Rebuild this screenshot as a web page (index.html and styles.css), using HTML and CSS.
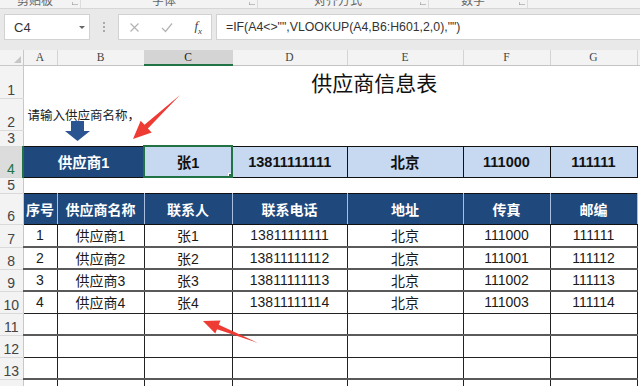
FILE: index.html
```html
<!DOCTYPE html>
<html lang="zh-CN">
<head>
  <meta charset="UTF-8" />
  <title>供应商信息表</title>
  <link rel="stylesheet" href="styles.css">
</head>
<body>
  <!-- ribbon group labels, cut off at the top -->
  <div class="ribbon">
    <div class="group g1"><span class="label">剪贴板</span><span class="launch"></span></div>
    <div class="group g2"><span class="label">字体</span><span class="launch"></span></div>
    <div class="group g3"><span class="label">对齐方式</span><span class="launch"></span></div>
    <div class="group g4"><span class="label">数字</span><span class="launch"></span></div>
  </div>

  <!-- formula bar -->
  <div class="fbar">
    <div class="namebox">
      <span>C4</span>
      <span class="caret"></span>
    </div>
    <div class="dots"><i></i><i></i><i></i></div>
    <div class="fxbox">
      <svg width="11" height="11" viewBox="0 0 11 11"><path d="M1.5 1.5 L9.5 9.5 M9.5 1.5 L1.5 9.5" stroke="#b3b3b3" stroke-width="1.2" fill="none"/></svg>
      <svg width="12" height="11" viewBox="0 0 12 11"><path d="M1 6 L4.5 9.5 L11 1.5" stroke="#b3b3b3" stroke-width="1.2" fill="none"/></svg>
      <span class="fx"><i>f</i><sub>x</sub></span>
    </div>
    <div class="formula">=IF(A4&lt;&gt;"",VLOOKUP(A4,B6:H601,2,0),"")</div>
  </div>

  <div class="sheet">
    <table class="grid">
      <colgroup>
        <col class="w-rh"><col class="w-a"><col class="w-b"><col class="w-c"><col class="w-d">
        <col class="w-e"><col class="w-f"><col class="w-g"><col class="w-h">
      </colgroup>
      <tr class="r-head">
        <th class="corner"><span class="tri"></span></th>
        <th class="ch">A</th><th class="ch">B</th><th class="ch on">C</th><th class="ch">D</th>
        <th class="ch">E</th><th class="ch">F</th><th class="ch">G</th><th class="ch">H</th>
      </tr>
      <tr class="r1">
        <th class="rh">1</th>
        <td colspan="8" class="title">供应商信息表</td>
      </tr>
      <tr class="r2">
        <th class="rh">2</th>
        <td colspan="4" class="hint">请输入供应商名称，</td>
        <td></td><td></td><td></td><td></td>
      </tr>
      <tr class="r3">
        <th class="rh">3</th>
        <td></td><td></td><td></td><td></td><td></td><td></td><td></td><td></td>
      </tr>
      <tr class="r4">
        <th class="rh on">4</th>
        <td colspan="2" class="sup">供应商1</td>
        <td class="lb sel">张1<span class="handle"></span></td>
        <td class="lb">13811111111</td>
        <td class="lb">北京</td>
        <td class="lb">111000</td>
        <td class="lb">111111</td>
        <td></td>
      </tr>
      <tr class="r5">
        <th class="rh">5</th>
        <td></td><td></td><td></td><td></td><td></td><td></td><td></td><td></td>
      </tr>
      <tr class="r6">
        <th class="rh">6</th>
        <td class="hd first">序号</td>
        <td class="hd">供应商名称</td>
        <td class="hd">联系人</td>
        <td class="hd">联系电话</td>
        <td class="hd">地址</td>
        <td class="hd">传真</td>
        <td class="hd">邮编</td>
        <td></td>
      </tr>
      <tr class="r7">
        <th class="rh">7</th>
        <td class="bx">1</td><td class="bx">供应商1</td><td class="bx">张1</td><td class="bx">13811111111</td>
        <td class="bx">北京</td><td class="bx">111000</td><td class="bx">111111</td><td></td>
      </tr>
      <tr class="r8">
        <th class="rh">8</th>
        <td class="bx">2</td><td class="bx">供应商2</td><td class="bx">张2</td><td class="bx">13811111112</td>
        <td class="bx">北京</td><td class="bx">111001</td><td class="bx">111112</td><td></td>
      </tr>
      <tr class="r9">
        <th class="rh">9</th>
        <td class="bx">3</td><td class="bx">供应商3</td><td class="bx">张3</td><td class="bx">13811111113</td>
        <td class="bx">北京</td><td class="bx">111002</td><td class="bx">111113</td><td></td>
      </tr>
      <tr class="r10">
        <th class="rh">10</th>
        <td class="bx">4</td><td class="bx">供应商4</td><td class="bx">张4</td><td class="bx">13811111114</td>
        <td class="bx">北京</td><td class="bx">111003</td><td class="bx">111114</td><td></td>
      </tr>
      <tr class="r11">
        <th class="rh">11</th>
        <td class="bx"></td><td class="bx"></td><td class="bx"></td><td class="bx"></td>
        <td class="bx"></td><td class="bx"></td><td class="bx"></td><td></td>
      </tr>
      <tr class="r12">
        <th class="rh">12</th>
        <td class="bx"></td><td class="bx"></td><td class="bx"></td><td class="bx"></td>
        <td class="bx"></td><td class="bx"></td><td class="bx"></td><td></td>
      </tr>
      <tr class="r13">
        <th class="rh">13</th>
        <td class="bx"></td><td class="bx"></td><td class="bx"></td><td class="bx"></td>
        <td class="bx"></td><td class="bx"></td><td class="bx"></td><td></td>
      </tr>
      <tr class="r14">
        <th class="rh">14</th>
        <td class="bx"></td><td class="bx"></td><td class="bx"></td><td class="bx"></td>
        <td class="bx"></td><td class="bx"></td><td class="bx"></td><td></td>
      </tr>
    </table>
  </div>

  <!-- shapes drawn over the sheet -->
  <svg class="marks" width="640" height="386" viewBox="0 0 640 386">
    <polygon points="71,121 84,121 84,131 90,131 77.5,141 65,131 71,131" fill="#2b5591"/>
    <polygon points="180,95 147.9,128.4 151.7,132.5 133,139 140.7,120.8 144.5,124.8" fill="#ee3b33"/>
    <polygon points="258,343 218.8,324.7 220.5,320.5 203,321 215.3,333.5 217,329.3" fill="#ee3b33"/>
  </svg>
</body>
</html>
```

FILE: styles.css
```css
* {
  box-sizing: border-box;
}

body {
  margin: 0;
  width: 640px;
  height: 386px;
  overflow: hidden;
  position: relative;
  background: #fff;
  font-family: "Liberation Sans", "Noto Sans CJK SC", sans-serif;
}

/* ribbon */
.ribbon {
  height: 9px;
  display: flex;
  overflow: hidden;
  background: #f3f3f3;
  border-bottom: 1px solid #d6d6d6;
}

.group {
  display: flex;
  border-right: 1px solid #dcdcdc;
}

.g1 { width: 81px; }
.g2 { width: 177px; }
.g3 { width: 171px; }
.g4 { width: 99px; }

.group .label {
  flex: 1;
  text-align: center;
  font-size: 12px;
  line-height: 12px;
  margin-top: -6px;
  color: #666;
  font-family: "Noto Sans CJK SC", sans-serif;
}

.launch {
  width: 10px;
  height: 5px;
  margin-top: 1px;
  border-left: 1px solid #999;
  border-bottom: 1px solid #999;
  transform: scale(0.6);
}

/* formula bar */
.fbar {
  display: flex;
  align-items: center;
  height: 41px;
  padding: 5px 0 10px 4px;
  background: #e9e9e9;
}

.namebox {
  width: 86px;
  height: 26px;
  display: flex;
  align-items: center;
  justify-content: space-between;
  padding: 0 4px 0 9px;
  background: #fff;
  border: 1px solid #d2d2d2;
  font-size: 13px;
  color: #333;
}

.caret {
  width: 0;
  height: 0;
  border-left: 3px solid transparent;
  border-right: 3px solid transparent;
  border-top: 3px solid #666;
}

.dots {
  width: 28px;
  display: flex;
  flex-direction: column;
  align-items: center;
  gap: 2px;
}

.dots i {
  width: 2px;
  height: 2px;
  background: #aaa;
}

.fxbox {
  width: 94px;
  height: 26px;
  display: flex;
  align-items: center;
  justify-content: space-between;
  padding: 0 9px 0 10px;
  background: #fff;
  border: 1px solid #d2d2d2;
}

.fx {
  font-family: "Liberation Serif", serif;
  font-size: 13px;
  color: #444;
}

.fx sub {
  font-size: 9px;
  font-style: italic;
}

.formula {
  flex: 1;
  height: 26px;
  margin-left: 4px;
  padding-left: 9px;
  background: #fff;
  border: 1px solid #d2d2d2;
  border-right: none;
  font-size: 12.3px;
  line-height: 24px;
  color: #333;
  white-space: nowrap;
}

/* sheet */
.sheet {
  width: 640px;
  overflow: hidden;
}

.grid {
  border-collapse: collapse;
  table-layout: fixed;
  width: 725px;
}

.w-rh { width: 23px; }
.w-a { width: 34px; }
.w-b { width: 87px; }
.w-c { width: 88px; }
.w-d { width: 115px; }
.w-e { width: 116px; }
.w-f { width: 87px; }
.w-g { width: 87px; }
.w-h { width: 88px; }

.grid th,
.grid td {
  padding: 0;
  white-space: nowrap;
  overflow: hidden;
}

.grid td {
  text-align: center;
  vertical-align: middle;
  font-size: 14px;
  color: #1a1a1a;
}

.r-head { height: 15px; }
.r1 { height: 33px; }
.r2 { height: 32px; }
.r3 { height: 15px; }
.r4 { height: 31px; }
.r5 { height: 13px; }
.r6 { height: 31px; }
.r7 { height: 23px; }
.r8 { height: 21px; }
.r9 { height: 22px; }
.r10 { height: 22px; }
.r11 { height: 22px; }
.r12 { height: 22px; }
.r13 { height: 22px; }
.r14 { height: 22px; }

.corner {
  background: #f3f3f3;
  border-right: 1px solid #c8c8c8;
  border-bottom: 1px solid #c8c8c8;
  text-align: right;
  vertical-align: bottom;
  line-height: 0;
}

.tri {
  display: inline-block;
  margin: 0 2px 2px 0;
  border-left: 7px solid transparent;
  border-bottom: 7px solid #c6c6c6;
}

.ch {
  background: #f3f3f3;
  border-right: 1px solid #d4d4d4;
  border-bottom: 1px solid #c4c4c4;
  font-family: "Liberation Serif", serif;
  font-weight: normal;
  font-size: 11.5px;
  line-height: 14px;
  color: #444;
}

.ch.on {
  background: #d4d4d4;
  border-bottom: 2px solid #217346;
  color: #222;
}

.rh {
  background: #f3f3f3;
  border-right: 1px solid #c8c8c8;
  border-bottom: 1px solid #dadada;
  text-align: center;
  vertical-align: bottom;
  padding-bottom: 1px !important;
  font-weight: normal;
  font-size: 14px;
  line-height: 14px;
  color: #444;
}

.rh.on {
  background: #dcdcdc;
  border-right: 2px solid #217346;
  color: #217346;
}

.grid td.title {
  font-family: "Noto Sans CJK SC", sans-serif;
  font-size: 21px;
  color: #111;
}

.grid td.hint {
  text-align: left;
  padding-left: 4px;
  font-size: 12.5px;
  color: #222;
}

.grid td.sup {
  background: #1f497d;
  color: #fff;
  font-weight: bold;
  font-size: 14.5px;
  border: 1px solid #111;
}

.grid td.lb {
  background: #c6d9f1;
  color: #111;
  font-weight: bold;
  font-size: 14.5px;
  border: 1px solid #111;
}

.grid td.sel {
  position: relative;
  border: 2px solid #217346;
}

.handle {
  position: absolute;
  right: -3px;
  bottom: -3px;
  width: 6px;
  height: 6px;
  background: #217346;
  border: 1px solid #fff;
}

.grid td.hd {
  background: #1f497d;
  color: #fff;
  font-weight: bold;
  border-top: 1px solid #111;
  border-bottom: 1px solid #111;
  border-left: 1px solid #a9bfdf;
  border-right: 1px solid #a9bfdf;
}

.grid td.hd.first {
  border-left: 1px solid #111;
}

.grid td.bx {
  border: 1px solid #222;
}

.r7 td.bx,
.r8 td.bx,
.r9 td.bx,
.r11 td.bx,
.r13 td.bx {
  border-bottom: 2px solid #5a5a5a;
}

.marks {
  position: absolute;
  left: 0;
  top: 0;
  pointer-events: none;
}
```
